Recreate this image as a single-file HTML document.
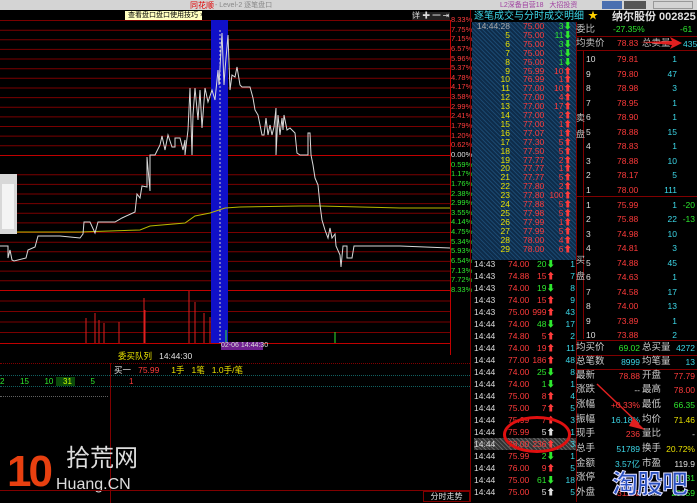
<!DOCTYPE html>
<html><head><meta charset="utf-8"><style>
*{margin:0;padding:0;box-sizing:border-box}
body{width:697px;height:502px;background:#000;overflow:hidden;position:relative;font-family:"Liberation Sans","Noto Sans CJK SC",sans-serif;font-size:9px;color:#ccc}
.a{position:absolute;white-space:nowrap;line-height:9px}
.r{color:#ff3b3b}.g{color:#2ee82e}.c{color:#3cd7e8}.y{color:#e8e000}.w{color:#e0e0e0}.gr{color:#c0c0c0}
.tl .row{position:absolute;left:474px;width:100px;height:9px;font-size:8.5px;line-height:9px}
.tl .t{position:absolute;right:64px;color:#e8e000}
.tl .p{position:absolute;left:49px;color:#ff3b3b}
.tl .v{position:absolute;right:2px}
.bl .row{position:absolute;left:474px;width:102px;height:12px;font-size:8.5px;line-height:12px}
.bl .t{position:absolute;left:0;color:#ddd}
.bl .p{position:absolute;left:34px}
.bl .v{position:absolute;right:21px}
.bl .n{position:absolute;right:1px;color:#3cd7e8}
.ob .row{position:absolute;left:577px;width:120px;height:12px;font-size:8.5px;line-height:12px}
.ob .i{position:absolute;left:9px;color:#ddd}
.ob .p{position:absolute;left:40px;color:#ff3b3b}
.ob .q{position:absolute;right:20px;color:#3cd7e8;width:30px;text-align:right}
.ob .d{position:absolute;right:2px;color:#2ee82e}
.st .row{position:absolute;left:575px;width:122px;height:14px;font-size:9.5px;line-height:14px}
.st .l1{position:absolute;left:1px;color:#ccc}
.st .v1{position:absolute;right:57px;font-size:8.5px}
.st .l2{position:absolute;left:67px;color:#ccc}
.st .v2{position:absolute;right:2px;font-size:8.5px}
</style></head><body>
<div class="a" style="left:0;top:0;width:697px;height:10px;background:#d4d4d4"></div>
<div class="a" style="left:190px;top:1px;font-size:8px;color:#e00000">同花顺</div>
<div class="a" style="left:215px;top:1px;font-size:7px;color:#888">- Level-2 逐笔盘口</div>
<div class="a" style="left:500px;top:1px;font-size:7px;color:#a040a0">L2深备自营18 &nbsp; 大招投资</div>
<div class="a" style="left:602px;top:1px;width:20px;height:8px;background:#4a6fb0"></div>
<div class="a" style="left:624px;top:1px;width:22px;height:8px;background:#555"></div>
<div class="a" style="left:653px;top:1px;width:40px;height:8px;border:1px solid #999"></div>
<div class="a" style="left:125px;top:11px;width:77px;height:10px;background:#ffffc0;color:#000;font-size:7px;padding-left:3px">查看盘口盘口使用技巧 ×</div>
<div class="a" style="left:412px;top:12px;width:38px;height:8px;background:#222;color:#ddd;font-size:8px;line-height:8px">详 ✚ ━ ⇥</div>

<svg class="a" style="left:0;top:10px" width="470" height="345">
<g stroke="#7a0000" stroke-width="1">
<line x1="0" y1="10.5" x2="450" y2="10.5"/><line x1="0" y1="20.2" x2="450" y2="20.2"/><line x1="0" y1="29.8" x2="450" y2="29.8"/><line x1="0" y1="39.4" x2="450" y2="39.4"/><line x1="0" y1="49" x2="450" y2="49"/><line x1="0" y1="58.7" x2="450" y2="58.7"/><line x1="0" y1="68.3" x2="450" y2="68.3"/><line x1="0" y1="78" x2="450" y2="78"/><line x1="0" y1="87.6" x2="450" y2="87.6"/><line x1="0" y1="97.2" x2="450" y2="97.2"/><line x1="0" y1="106.9" x2="450" y2="106.9"/><line x1="0" y1="116.5" x2="450" y2="116.5"/><line x1="0" y1="126.1" x2="450" y2="126.1"/><line x1="0" y1="135.8" x2="450" y2="135.8"/><line x1="0" y1="164.7" x2="450" y2="164.7"/><line x1="0" y1="174.4" x2="450" y2="174.4"/><line x1="0" y1="184" x2="450" y2="184"/><line x1="0" y1="193.6" x2="450" y2="193.6"/><line x1="0" y1="203.3" x2="450" y2="203.3"/><line x1="0" y1="212.9" x2="450" y2="212.9"/><line x1="0" y1="222.5" x2="450" y2="222.5"/><line x1="0" y1="232.2" x2="450" y2="232.2"/><line x1="0" y1="241.8" x2="450" y2="241.8"/><line x1="0" y1="251.4" x2="450" y2="251.4"/><line x1="0" y1="261.1" x2="450" y2="261.1"/><line x1="0" y1="270.7" x2="450" y2="270.7"/><line x1="0" y1="291" x2="450" y2="291"/><line x1="0" y1="301.5" x2="450" y2="301.5"/><line x1="0" y1="312" x2="450" y2="312"/><line x1="0" y1="322.5" x2="450" y2="322.5"/>
</g>
<line x1="0" y1="145.5" x2="450" y2="145.5" stroke="#c00000" stroke-width="1"/>
<line x1="0" y1="280.5" x2="450" y2="280.5" stroke="#c00000" stroke-width="1"/>
<line x1="0" y1="333.5" x2="450" y2="333.5" stroke="#c00000" stroke-width="1"/>
<line x1="450.5" y1="10" x2="450.5" y2="345" stroke="#c00000"/>
<rect x="211" y="10" width="17" height="323" fill="#1010c8"/>
<line x1="220" y1="20" x2="220" y2="333" stroke="#ccc" stroke-dasharray="2,2"/>
<g stroke="#dd2020" stroke-width="1">
<line x1="86" y1="333" x2="86" y2="308"/><line x1="95" y1="333" x2="95" y2="303"/><line x1="99" y1="333" x2="99" y2="310"/><line x1="104" y1="333" x2="104" y2="313"/><line x1="119" y1="333" x2="119" y2="312"/><line x1="144" y1="333" x2="144" y2="288"/><line x1="189" y1="333" x2="189" y2="281"/><line x1="195" y1="333" x2="195" y2="292"/><line x1="204" y1="333" x2="204" y2="303"/><line x1="210" y1="333" x2="210" y2="307"/><line x1="145" y1="333" x2="145" y2="300"/>
</g>
<line x1="335" y1="333" x2="335" y2="322" stroke="#2ee82e"/>
<line x1="226" y1="333" x2="226" y2="320" stroke="#2ee82e"/>
<polyline fill="none" stroke="#b8b800" stroke-width="1" points="0,222 80,222 140,220 150,216 185,213 195,206 210,203 225,198 240,197 300,196 320,196 360,197 400,198 450,198"/>
<polyline fill="none" stroke="#d8d8d8" stroke-width="1" points="0,236 8,236 8,248 10,240 12,250 14,251 26,248 28,240 35,237 38,226 60,226 80,228 83,224 84,212 90,212 95,223 98,212 115,212 122,208 135,202 137,184 140,188 142,176 147,177 147,147 150,181 150,145 155,145 160,135 162,126 165,140 168,125 172,137 175,137 175,128 180,128 183,140 185,130 185,145 188,120 190,78 192,145 193,105 195,78 198,110 200,80 202,118 205,78 208,92 212,80 215,90 218,60 219,75 222,23 224,75 225,60 228,25 230,80 232,65 235,67 237,57 240,75 242,77 250,77 253,88 255,100 258,105 262,125 264,125 266,108 268,125 270,115 272,125 274,117 276,98 276,145 278,105 280,125 282,108 283,120 284,105 287,120 290,118 295,123 297,143 300,145 308,145 308,123 310,123 311,145 313,155 315,168 318,175 320,195 322,210 325,220 328,228 330,218 332,228 335,224 336,236 340,245 341,257 343,236 347,236 347,248 352,248 354,236 400,236 450,238"/>
<rect x="0" y="164" width="17" height="60" fill="#d8d8d8"/>
<rect x="2" y="174" width="12" height="45" fill="#f4f4f4"/>
</svg>
<div style="position:absolute;left:451px;top:15px;font-size:7.5px;line-height:9.64px;width:20px">
<div class="r">8.33%</div><div class="r">7.75%</div><div class="r">7.15%</div><div class="r">6.57%</div><div class="r">5.96%</div><div class="r">5.37%</div><div class="r">4.78%</div><div class="r">4.17%</div><div class="r">3.58%</div><div class="r">2.99%</div><div class="r">2.41%</div><div class="r">1.79%</div><div class="r">1.20%</div><div class="r">0.62%</div><div class="w">0.00%</div><div class="g">0.59%</div><div class="g">1.17%</div><div class="g">1.76%</div><div class="g">2.38%</div><div class="g">2.99%</div><div class="g">3.55%</div><div class="g">4.14%</div><div class="g">4.75%</div><div class="g">5.34%</div><div class="g">5.93%</div><div class="g">6.54%</div><div class="g">7.13%</div><div class="g">7.72%</div><div class="g">8.33%</div>
</div>
<div class="a" style="left:221px;top:342px;width:42px;height:8px;background:#702090;color:#ddd;font-size:7px;line-height:8px">02-06 14:44:30</div>
<div class="a y" style="left:118px;top:352px;font-size:8.5px">委买队列 <span class="w">&nbsp; 14:44:30</span></div>
<div class="a" style="left:0;top:363px;width:470px;border-top:1px dotted #800000"></div>
<div class="a" style="left:110px;top:363px;height:140px;border-left:1px solid #800000"></div>
<div class="a w" style="left:114px;top:366px;font-size:8.5px">买一 &nbsp; <span class="r">75.99</span> &nbsp; &nbsp; <span class="y">1手 &nbsp; 1笔 &nbsp; 1.0手/笔</span></div>
<div class="a" style="left:0;top:375px;width:470px;border-top:1px dotted #106060"></div>
<div class="a g" style="left:0;top:377px;font-size:8px">2 &nbsp; &nbsp; &nbsp; 15 &nbsp; &nbsp; &nbsp; 10 <span style="background:#0a4a0a;color:#ccff00;padding:0 3px">&nbsp; 31</span> &nbsp; &nbsp; &nbsp; 5</div>
<div class="a r" style="left:129px;top:377px;font-size:8px">1</div>
<div class="a" style="left:0;top:386px;width:470px;border-top:1px dotted #106060"></div>
<div class="a" style="left:0;top:396px;width:108px;border-top:1px dotted #606060"></div>
<div class="a" style="left:7px;top:450px;font-size:44px;line-height:44px;color:#e84010;font-weight:bold;letter-spacing:-3px">10</div>
<div class="a" style="left:66px;top:445px;font-size:24px;line-height:28px;color:#ddd">拾荒网</div>
<div class="a" style="left:56px;top:476px;font-size:16px;line-height:18px;color:#ddd">Huang.CN</div>
<div class="a" style="left:0;top:490px;width:470px;border-top:1px solid #800000"></div>
<div class="a w" style="left:423px;top:491px;width:47px;height:11px;border:1px solid #800000;font-size:8px;line-height:10px;text-align:center">分时走势</div>
<div class="a" style="left:470px;top:10px;height:492px;border-left:1px solid #800000"></div>

<div class="a c" style="left:474px;top:11px;font-size:10px;line-height:12px">逐笔成交与分时成交明细</div>
<div class="a" style="left:588px;top:11px;font-size:10px;line-height:12px;color:#ffd000">★</div>
<div class="a w" style="left:612px;top:11px;font-size:11px;line-height:13px;font-weight:bold">纳尔股份 002825</div>
<div class="a" style="left:472px;top:22px;width:104px;height:238px;background:repeating-linear-gradient(45deg,#0e2c4a 0 2px,#1a4870 2px 3px)"></div>
<div class="tl">
<div class="row" style="top:22px"><span class="t" style="color:#aaa">14:44:28</span><span class="p">75.00</span><span class="v g">3⬇</span></div>
<div class="row" style="top:31px"><span class="t">5</span><span class="p">75.00</span><span class="v g">11⬇</span></div>
<div class="row" style="top:40px"><span class="t">6</span><span class="p">75.00</span><span class="v g">3⬇</span></div>
<div class="row" style="top:49px"><span class="t">7</span><span class="p">75.00</span><span class="v g">1⬇</span></div>
<div class="row" style="top:58px"><span class="t">8</span><span class="p">75.00</span><span class="v g">1⬇</span></div>
<div class="row" style="top:67px"><span class="t">9</span><span class="p">75.99</span><span class="v r">10⬆</span></div>
<div class="row" style="top:75px"><span class="t">10</span><span class="p">76.99</span><span class="v r">1⬆</span></div>
<div class="row" style="top:84px"><span class="t">11</span><span class="p">77.00</span><span class="v r">10⬆</span></div>
<div class="row" style="top:93px"><span class="t">12</span><span class="p">77.00</span><span class="v r">4⬆</span></div>
<div class="row" style="top:102px"><span class="t">13</span><span class="p">77.00</span><span class="v r">17⬆</span></div>
<div class="row" style="top:111px"><span class="t">14</span><span class="p">77.00</span><span class="v r">2⬆</span></div>
<div class="row" style="top:120px"><span class="t">15</span><span class="p">77.00</span><span class="v r">1⬆</span></div>
<div class="row" style="top:129px"><span class="t">16</span><span class="p">77.07</span><span class="v r">1⬆</span></div>
<div class="row" style="top:138px"><span class="t">17</span><span class="p">77.30</span><span class="v r">5⬆</span></div>
<div class="row" style="top:147px"><span class="t">18</span><span class="p">77.50</span><span class="v r">5⬆</span></div>
<div class="row" style="top:156px"><span class="t">19</span><span class="p">77.77</span><span class="v r">2⬆</span></div>
<div class="row" style="top:164px"><span class="t">20</span><span class="p">77.77</span><span class="v r">1⬆</span></div>
<div class="row" style="top:173px"><span class="t">21</span><span class="p">77.77</span><span class="v r">5⬆</span></div>
<div class="row" style="top:182px"><span class="t">22</span><span class="p">77.80</span><span class="v r">2⬆</span></div>
<div class="row" style="top:191px"><span class="t">23</span><span class="p">77.80</span><span class="v r">100⬆</span></div>
<div class="row" style="top:200px"><span class="t">24</span><span class="p">77.88</span><span class="v r">5⬆</span></div>
<div class="row" style="top:209px"><span class="t">25</span><span class="p">77.98</span><span class="v r">5⬆</span></div>
<div class="row" style="top:218px"><span class="t">26</span><span class="p">77.99</span><span class="v r">1⬆</span></div>
<div class="row" style="top:227px"><span class="t">27</span><span class="p">77.99</span><span class="v r">5⬆</span></div>
<div class="row" style="top:236px"><span class="t">28</span><span class="p">78.00</span><span class="v r">4⬆</span></div>
<div class="row" style="top:245px"><span class="t">29</span><span class="p">78.00</span><span class="v r">6⬆</span></div>
</div>
<div class="a" style="left:576px;top:22px;height:480px;border-left:1px solid #800000"></div>
<div class="bl">
<div class="row" style="top:258px"><span class="t">14:43</span><span class="p r">74.00</span><span class="v g">20⬇</span><span class="n">1</span></div>
<div class="row" style="top:270px"><span class="t">14:43</span><span class="p r">74.88</span><span class="v r">15⬆</span><span class="n">7</span></div>
<div class="row" style="top:282px"><span class="t">14:43</span><span class="p r">74.00</span><span class="v g">19⬇</span><span class="n">8</span></div>
<div class="row" style="top:294px"><span class="t">14:43</span><span class="p r">74.00</span><span class="v r">15⬆</span><span class="n">9</span></div>
<div class="row" style="top:306px"><span class="t">14:43</span><span class="p r">75.00</span><span class="v r">999⬆</span><span class="n">43</span></div>
<div class="row" style="top:318px"><span class="t">14:44</span><span class="p r">74.00</span><span class="v g">48⬇</span><span class="n">17</span></div>
<div class="row" style="top:330px"><span class="t">14:44</span><span class="p r">74.80</span><span class="v r">5⬆</span><span class="n">2</span></div>
<div class="row" style="top:342px"><span class="t">14:44</span><span class="p r">74.00</span><span class="v r">19⬆</span><span class="n">11</span></div>
<div class="row" style="top:354px"><span class="t">14:44</span><span class="p r">77.00</span><span class="v r">186⬆</span><span class="n">48</span></div>
<div class="row" style="top:366px"><span class="t">14:44</span><span class="p r">74.00</span><span class="v g">25⬇</span><span class="n">8</span></div>
<div class="row" style="top:378px"><span class="t">14:44</span><span class="p r">74.00</span><span class="v g">1⬇</span><span class="n">1</span></div>
<div class="row" style="top:390px"><span class="t">14:44</span><span class="p r">75.00</span><span class="v r">8⬆</span><span class="n">4</span></div>
<div class="row" style="top:402px"><span class="t">14:44</span><span class="p r">75.00</span><span class="v r">7⬆</span><span class="n">5</span></div>
<div class="row" style="top:414px"><span class="t">14:44</span><span class="p r">75.99</span><span class="v r">7⬆</span><span class="n">3</span></div>
<div class="row" style="top:426px"><span class="t">14:44</span><span class="p r">75.99</span><span class="v w">5⬆</span><span class="n">1</span></div>
<div class="row" style="top:438px;background:repeating-linear-gradient(45deg,#333 0 2px,#666 2px 3px)"><span class="t">14:44</span><span class="p r">78.00</span><span class="v r">236⬆</span><span class="n">3</span></div>
<div class="row" style="top:450px"><span class="t">14:44</span><span class="p r">75.99</span><span class="v g">2⬇</span><span class="n">1</span></div>
<div class="row" style="top:462px"><span class="t">14:44</span><span class="p r">76.00</span><span class="v r">9⬆</span><span class="n">5</span></div>
<div class="row" style="top:474px"><span class="t">14:44</span><span class="p r">75.00</span><span class="v g">61⬇</span><span class="n">18</span></div>
<div class="row" style="top:486px"><span class="t">14:44</span><span class="p r">75.00</span><span class="v w">5⬆</span><span class="n">5</span></div>
</div>
<div class="a" style="left:503px;top:416px;width:68px;height:37px;border:3px solid #e01010;border-radius:50%"></div>

<div class="a gr" style="left:576px;top:24px;font-size:9.5px;line-height:11px">委比</div>
<div class="a g" style="left:613px;top:25px;font-size:8.5px">-27.35%</div>
<div class="a g" style="left:680px;top:25px;font-size:8.5px">-61</div>
<div class="a" style="left:576px;top:36px;width:121px;border-top:1px solid #800000"></div>
<div class="a gr" style="left:576px;top:38px;font-size:9.5px;line-height:11px">均卖价</div>
<div class="a r" style="left:617px;top:39px;font-size:8.5px">78.83</div>
<div class="a gr" style="left:642px;top:38px;font-size:9.5px;line-height:11px">总卖量</div>
<div class="a c" style="left:683px;top:40px;font-size:8.5px">435</div>
<svg class="a" style="left:640px;top:36px" width="45" height="14"><path d="M0 6 L32 5 L30 1 L42 7 L30 13 L32 9 Z" fill="#e02020"/></svg>
<div class="a" style="left:576px;top:50px;width:121px;border-top:1px solid #800000"></div>
<div class="a" style="left:583px;top:50px;height:146px;border-left:1px solid #800000"></div>
<div class="a gr" style="left:576px;top:110px;font-size:9px;line-height:16px;width:8px">卖<br>盘</div>
<div class="ob">
<div class="row" style="top:53px"><span class="i">10</span><span class="p">79.81</span><span class="q">1</span></div>
<div class="row" style="top:68px"><span class="i">9</span><span class="p">79.80</span><span class="q">47</span></div>
<div class="row" style="top:82px"><span class="i">8</span><span class="p">78.98</span><span class="q">3</span></div>
<div class="row" style="top:97px"><span class="i">7</span><span class="p">78.95</span><span class="q">1</span></div>
<div class="row" style="top:111px"><span class="i">6</span><span class="p">78.90</span><span class="q">1</span></div>
<div class="row" style="top:126px"><span class="i">5</span><span class="p">78.88</span><span class="q">15</span></div>
<div class="row" style="top:140px"><span class="i">4</span><span class="p">78.83</span><span class="q">1</span></div>
<div class="row" style="top:155px"><span class="i">3</span><span class="p">78.88</span><span class="q">10</span></div>
<div class="row" style="top:169px"><span class="i">2</span><span class="p">78.17</span><span class="q">5</span></div>
<div class="row" style="top:184px"><span class="i">1</span><span class="p">78.00</span><span class="q">111</span></div>
</div>
<div class="a" style="left:576px;top:196px;width:121px;border-top:1px solid #800000"></div>
<div class="a" style="left:583px;top:196px;height:143px;border-left:1px solid #800000"></div>
<div class="a gr" style="left:576px;top:252px;font-size:9px;line-height:16px;width:8px">买<br>盘</div>
<div class="ob">
<div class="row" style="top:199px"><span class="i">1</span><span class="p">75.99</span><span class="q">1</span><span class="d">-20</span></div>
<div class="row" style="top:213px"><span class="i">2</span><span class="p">75.88</span><span class="q">22</span><span class="d">-13</span></div>
<div class="row" style="top:228px"><span class="i">3</span><span class="p">74.98</span><span class="q">10</span></div>
<div class="row" style="top:242px"><span class="i">4</span><span class="p">74.81</span><span class="q">3</span></div>
<div class="row" style="top:257px"><span class="i">5</span><span class="p">74.88</span><span class="q">45</span></div>
<div class="row" style="top:271px"><span class="i">6</span><span class="p">74.63</span><span class="q">1</span></div>
<div class="row" style="top:286px"><span class="i">7</span><span class="p">74.58</span><span class="q">17</span></div>
<div class="row" style="top:300px"><span class="i">8</span><span class="p">74.00</span><span class="q">13</span></div>
<div class="row" style="top:315px"><span class="i">9</span><span class="p">73.89</span><span class="q">1</span></div>
<div class="row" style="top:329px"><span class="i">10</span><span class="p">73.88</span><span class="q">2</span></div>
</div>
<div class="a" style="left:576px;top:340px;width:121px;border-top:1px solid #800000"></div>
<div class="st">
<div class="row" style="top:341px"><span class="l1">均买价</span><span class="v1 g">69.02</span><span class="l2">总买量</span><span class="v2 c">4272</span></div>
</div>
<div class="a" style="left:576px;top:355px;width:121px;border-top:1px solid #800000"></div>
<div class="st">
<div class="row" style="top:355px"><span class="l1">总笔数</span><span class="v1 c">8999</span><span class="l2">均笔量</span><span class="v2 c">13</span></div>
</div>
<div class="a" style="left:576px;top:369px;width:121px;border-top:1px solid #800000"></div>
<div class="st">
<div class="row" style="top:369px"><span class="l1">最新</span><span class="v1 r">78.88</span><span class="l2">开盘</span><span class="v2 r">77.79</span></div>
<div class="row" style="top:383px"><span class="l1">涨跌</span><span class="v1 w">--</span><span class="l2">最高</span><span class="v2 r">78.00</span></div>
<div class="row" style="top:398px"><span class="l1">涨幅</span><span class="v1 r">+0.33%</span><span class="l2">最低</span><span class="v2 g">66.35</span></div>
<div class="row" style="top:413px"><span class="l1">振幅</span><span class="v1 c">16.18%</span><span class="l2">均价</span><span class="v2 y">71.46</span></div>
<div class="row" style="top:427px"><span class="l1">现手</span><span class="v1 r">236</span><span class="l2">量比</span><span class="v2 w">-</span></div>
<div class="row" style="top:442px"><span class="l1">总手</span><span class="v1 c">51789</span><span class="l2">换手</span><span class="v2 y">20.72%</span></div>
<div class="row" style="top:457px"><span class="l1">金额</span><span class="v1 c">3.57亿</span><span class="l2">市盈</span><span class="v2 w">119.9</span></div>
<div class="row" style="top:471px"><span class="l1">涨停</span><span class="v1 r"></span><span class="l2"></span><span class="v2 g">81.31</span></div>
<div class="row" style="top:486px"><span class="l1">外盘</span><span class="v1 r">31130</span><span class="l2">内盘</span><span class="v2 g">20659</span></div>
</div>
<svg class="a" style="left:595px;top:382px" width="55" height="52"><path d="M2 2 L44 42" stroke="#e02020" stroke-width="1.5"/><path d="M38 36 L50 48 L34 44 Z" fill="#e02020"/></svg>
<div class="a" style="left:612px;top:469px;font-size:26px;line-height:30px;font-weight:bold;color:#2a50c0;letter-spacing:-1px;-webkit-text-stroke:1px #e0e0ff">淘股吧</div>
</body></html>
